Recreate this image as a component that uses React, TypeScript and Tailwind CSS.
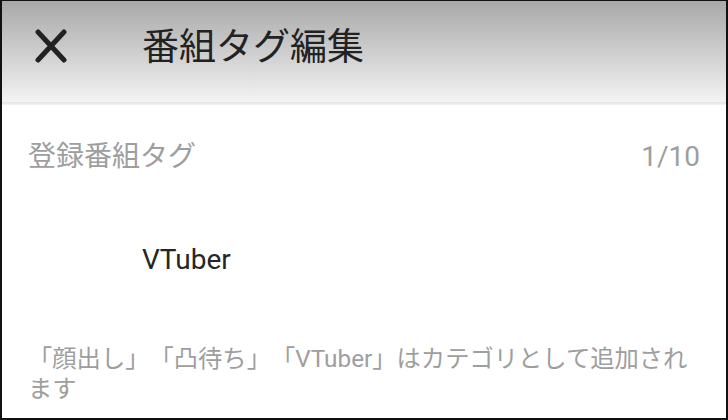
import React from 'react';

const font = { fontFamily: 'Roboto, "Noto Sans CJK JP", sans-serif' };

function CloseIcon() {
  return (
    <svg width="32" height="34" viewBox="0 0 32 34" className="shrink-0">
      <path
        d="M3 3 L29 31 M29 3 L3 31"
        stroke="#222"
        strokeWidth="5"
        strokeLinecap="round"
        fill="none"
      />
    </svg>
  );
}

export default function App() {
  return (
    <div
      className="w-[728px] h-[420px] overflow-hidden bg-white border-t border-x-2 border-b-2 border-[#111] flex flex-col [text-spacing-trim:space-all]"
      style={font}
    >
      <header className="h-[101px] shrink-0 flex items-start bg-gradient-to-b from-[#a9a9a9] to-[#f3f3f3]">
        <div className="ml-[33px] mt-[28px]">
          <CloseIcon />
        </div>
        <h1 className="ml-[75px] mt-[27px] text-[37px] leading-[40px] text-[#222] font-normal">
          番組タグ編集
        </h1>
      </header>
      <div className="h-[3px] shrink-0 bg-gradient-to-b from-[#e2e2e2] to-[#f4f4f4]" />

      <main className="flex-1 flex flex-col px-[26px]">
        <div className="mt-[32px] flex items-center justify-between h-[40px]">
          <span className="text-[28px] text-[#9e9e9e]">登録番組タグ</span>
          <span className="text-[28px] text-[#9e9e9e]">1/10</span>
        </div>

        <div className="mt-[63px] h-[40px] flex items-center pl-[114px]">
          <span className="text-[28px] text-[#262626]">VTuber</span>
        </div>

        <p className="mt-[64px] text-[24.3px] leading-[30px] text-[#9e9e9e]">
          「顔出し」「凸待ち」「VTuber」はカテゴリとして追加されます
        </p>
      </main>
    </div>
  );
}
